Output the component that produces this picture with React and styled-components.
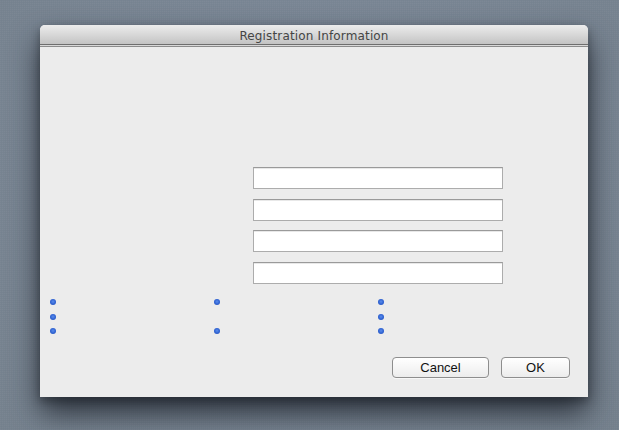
import React from 'react'
import styled, { createGlobalStyle } from 'styled-components'

const GlobalStyle = createGlobalStyle`
  html, body {
    margin: 0;
    padding: 0;
    width: 100%;
    height: 100%;
    overflow: hidden;
  }
  body {
    background-color: #7a8797;
    background-image:
      repeating-linear-gradient(0deg, rgba(255,255,255,0.012) 0px, rgba(255,255,255,0.012) 1px, rgba(0,0,0,0.012) 1px, rgba(0,0,0,0.012) 2px),
      repeating-linear-gradient(90deg, rgba(255,255,255,0.012) 0px, rgba(255,255,255,0.012) 1px, rgba(0,0,0,0.015) 1px, rgba(0,0,0,0.015) 2px),
      radial-gradient(ellipse at 50% 40%, #7e8b9b 0%, #76838f 100%);
  }
`

const Desktop = styled.div`
  padding: 25px 0 0 40px;
`

const Window = styled.div`
  width: 548px;
  height: 372px;
  display: flex;
  flex-direction: column;
  background: #ececec;
  border-radius: 5px 5px 0 0;
  box-shadow: 0 16px 30px rgba(22, 28, 36, 0.8), 0 4px 10px rgba(0, 0, 0, 0.35);
`

const TitleBar = styled.div`
  height: 20px;
  border-radius: 5px 5px 0 0;
  background: linear-gradient(#ececec, #d6d6d6 55%, #c3c3c3);
  border-bottom: 1px solid #6e6e6e;
  display: flex;
  align-items: center;
  justify-content: center;
  font-family: "DejaVu Sans", "Liberation Sans", sans-serif;
  font-size: 12px;
  letter-spacing: 0.15px;
  color: #454545;
  padding-top: 3px;
  box-sizing: border-box;
`

const Toolbar = styled.div`
  height: 1px;
  background: #d8d8d8;
  border-bottom: 1px solid #8c8c8c;
`

const Content = styled.div`
  flex: 1;
  display: flex;
  flex-direction: column;
  padding: 120px 18px 19px 0;
`

const Fields = styled.div`
  display: flex;
  flex-direction: column;
  gap: 9.7px;
  margin-left: 213px;
`

const Field = styled.input`
  width: 250px;
  height: 22px;
  box-sizing: border-box;
  border: 1px solid #acacac;
  border-top-color: #9a9a9a;
  background: #fff;
  box-shadow: inset 0 1px 0 #e8e8e8;
  margin: 0;
  padding: 0 4px;
  outline: none;
`

const Dots = styled.div`
  display: grid;
  grid-template-columns: repeat(3, 164px);
  grid-auto-rows: 14.7px;
  margin: 15px 0 0 10px;
`

const Dot = styled.span`
  width: 6px;
  height: 6px;
  border-radius: 50%;
  visibility: ${p => (p.$off ? 'hidden' : 'visible')};
  background: radial-gradient(circle at 50% 45%, #5a8ceb 0%, #2f62d2 55%, #2550b0 100%);
`

const Buttons = styled.div`
  margin-top: auto;
  display: flex;
  justify-content: flex-end;
  gap: 12px;
`

const Button = styled.button`
  width: ${p => p.$w}px;
  height: 21px;
  box-sizing: border-box;
  border: 1px solid #8e8e8e;
  border-radius: 4px;
  background: linear-gradient(#ffffff, #f6f6f6 50%, #ececec);
  box-shadow: 0 1px 0 rgba(255, 255, 255, 0.6);
  font-family: "Liberation Sans", Arial, sans-serif;
  font-size: 13px;
  color: #111;
  padding: 0;
  line-height: 19px;
`

const dots = [true, true, true, true, false, true, true, true, true]

export default function App() {
  return (
    <>
      <GlobalStyle />
      <Desktop>
        <Window>
          <TitleBar>Registration Information</TitleBar>
          <Toolbar />
          <Content>
            <Fields>
              <Field />
              <Field />
              <Field />
              <Field />
            </Fields>
            <Dots>
              {dots.map((on, i) => (
                <Dot key={i} $off={!on} />
              ))}
            </Dots>
            <Buttons>
              <Button $w={97}>Cancel</Button>
              <Button $w={69}>OK</Button>
            </Buttons>
          </Content>
        </Window>
      </Desktop>
    </>
  )
}
